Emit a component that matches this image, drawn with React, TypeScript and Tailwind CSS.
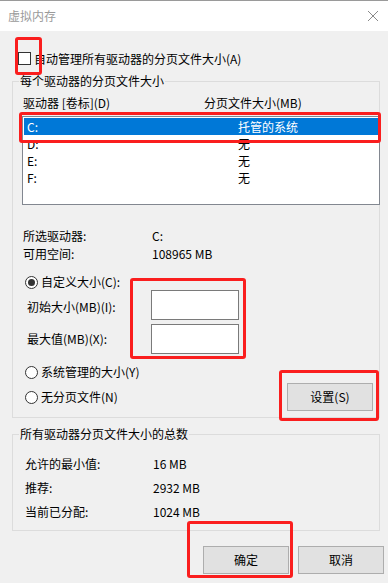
import React from 'react';

const font = { fontFamily: '"Noto Sans CJK SC", "Noto Sans", sans-serif' };

function Radio({ checked }: { checked?: boolean }) {
  return (
    <span className="w-[13px] h-[13px] rounded-full border border-[#333333] bg-white flex items-center justify-center shrink-0">
      {checked && <span className="w-[7px] h-[7px] rounded-full bg-[#333333]" />}
    </span>
  );
}

function Button({ label }: { label: string }) {
  return (
    <div className="w-[86px] h-[28px] bg-[#e1e1e1] border border-[#adadad] flex items-center justify-center text-[12px] text-black">
      {label}
    </div>
  );
}

function RedMark({ className }: { className: string }) {
  return <div className={`absolute border-[3px] border-[#fa1e1e] rounded-[3px] pointer-events-none ${className}`} />;
}

const drives = [
  { d: 'C:', size: '托管的系统', selected: true },
  { d: 'D:', size: '无' },
  { d: 'E:', size: '无' },
  { d: 'F:', size: '无' },
];

export default function App() {
  return (
    <div className="relative w-[388px] h-[583px] bg-[#f0f0f0] overflow-hidden text-[12px] text-black" style={font}>
      {/* Title bar */}
      <div className="h-[31px] bg-white border-t border-[#9a9a9a] flex items-center justify-between pl-[8px] pr-[5px]">
        <span className="text-[12px] text-[#9a9a9a] leading-[16px]">虚拟内存</span>
        <svg width="12" height="12" viewBox="0 0 12 12" className="mr-[4px]">
          <path d="M1 1 L11 11 M11 1 L1 11" stroke="#8a8a8a" strokeWidth="1" fill="none" />
        </svg>
      </div>

      {/* Auto manage */}
      <div className="mt-[21px] pl-[18px] flex items-center h-[13px]">
        <span className="w-[13px] h-[13px] border border-[#333333] bg-white shrink-0" />
        <span className="ml-[3px] leading-[16px]">自动管理所有驱动器的分页文件大小(A)</span>
      </div>

      {/* Per-drive group */}
      <div className="mt-[16px] ml-[12px] w-[368px] h-[337px] border border-[#dcdcdc] flex flex-col">
        <span className="-mt-[9px] ml-[6px] px-[1px] self-start bg-[#f0f0f0] leading-[16px]">每个驱动器的分页文件大小</span>

        <div className="mt-[6px] pl-[10px] flex leading-[16px]">
          <span className="w-[181px]">驱动器 [卷标](D)</span>
          <span>分页文件大小(MB)</span>
        </div>

        <div className="mt-[5px] ml-[9px] w-[358px] h-[89px] bg-white border border-[#828790] pt-[1px] px-[1px]">
          {drives.map((r) => (
            <div
              key={r.d}
              className={`h-[17px] flex items-center pl-[3px] ${r.selected ? 'bg-[#0078d7] text-white' : ''}`}
            >
              <span className="w-[211px]">{r.d}</span>
              <span>{r.size}</span>
            </div>
          ))}
        </div>

        <div className="mt-[22px] pl-[10px]">
          <div className="h-[18px] flex items-center">
            <span className="w-[129px]">所选驱动器:</span>
            <span>C:</span>
          </div>
          <div className="h-[18px] flex items-center">
            <span className="w-[129px]">可用空间:</span>
            <span>108965 MB</span>
          </div>
        </div>

        <div className="mt-[11px] pl-[12px] h-[16px] flex items-center">
          <Radio checked />
          <span className="ml-[3px]">自定义大小(C):</span>
        </div>

        <div className="pl-[14px] flex items-start">
          <span className="w-[124px] mt-[9px] leading-[16px]">初始大小(MB)(I):</span>
          <div className="w-[88px] h-[30px] bg-white border border-[#7a7a7a]" />
        </div>
        <div className="mt-[4px] pl-[14px] flex items-start">
          <span className="w-[124px] mt-[7px] leading-[16px]">最大值(MB)(X):</span>
          <div className="w-[88px] h-[30px] bg-white border border-[#7a7a7a]" />
        </div>

        <div className="mt-[10px] pl-[12px] flex justify-between pr-[6px]">
          <div className="flex flex-col gap-[9px]">
            <div className="h-[16px] flex items-center">
              <Radio />
              <span className="ml-[3px]">系统管理的大小(Y)</span>
            </div>
            <div className="h-[16px] flex items-center">
              <Radio />
              <span className="ml-[3px]">无分页文件(N)</span>
            </div>
          </div>
          <div className="mt-[19px]">
            <Button label="设置(S)" />
          </div>
        </div>
      </div>

      {/* Totals group */}
      <div className="mt-[16px] ml-[12px] w-[368px] h-[97px] border border-[#dcdcdc] flex flex-col">
        <span className="-mt-[9px] ml-[6px] px-[1px] self-start bg-[#f0f0f0] leading-[16px]">所有驱动器分页文件大小的总数</span>
        <div className="mt-[10px] pl-[12px]">
          {[
            ['允许的最小值:', '16 MB'],
            ['推荐:', '2932 MB'],
            ['当前已分配:', '1024 MB'],
          ].map(([k, v]) => (
            <div key={k} className="h-[24px] flex items-center">
              <span className="w-[128px]">{k}</span>
              <span>{v}</span>
            </div>
          ))}
        </div>
      </div>

      {/* Dialog buttons */}
      <div className="mt-[15px] pr-[4px] flex justify-end gap-[9px]">
        <Button label="确定" />
        <Button label="取消" />
      </div>

      {/* Annotations */}
      <RedMark className="left-[15px] top-[37px] w-[27px] h-[38px]" />
      <RedMark className="left-[19px] top-[112px] w-[362px] h-[31px]" />
      <RedMark className="left-[130px] top-[278px] w-[116px] h-[81px]" />
      <RedMark className="left-[279px] top-[370px] w-[100px] h-[51px]" />
      <RedMark className="left-[187px] top-[521px] w-[106px] h-[57px]" />
    </div>
  );
}
